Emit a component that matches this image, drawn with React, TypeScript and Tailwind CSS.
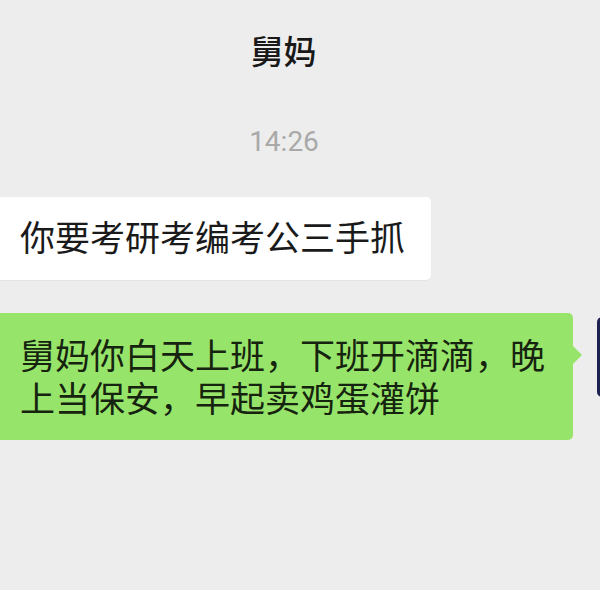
export default function App() {
    return (
        <div className="w-[600px] h-[590px] overflow-hidden bg-[#ededed] font-['Noto_Sans_CJK_SC','Noto_Sans',sans-serif]">
            {/* Header */}
            <div className="w-[567px] pt-[34px] text-center text-[33px] leading-[33px] font-medium text-[#191919]">
                舅妈
            </div>

            {/* Timestamp */}
            <div className="w-[568px] mt-[61px] text-center font-['Roboto',sans-serif] text-[28px] leading-[28px] text-[#a9a9a9]">
                14:26
            </div>

            {/* Incoming message */}
            <div className="mt-[41px] flex">
                <div className="bg-white rounded-r-[5px] pl-[20px] pr-[26px] pt-[17px] pb-[23px] text-[35px] leading-[43px] text-[#1a1a1a] shadow-[0_1px_1px_rgba(0,0,0,0.04)]">
                    你要考研考编考公三手抓
                </div>
            </div>

            {/* Outgoing message */}
            <div className="mt-[33px] flex items-start gap-[24px]">
                <div className="relative w-[573px] shrink-0 bg-[#97e46a] rounded-r-[5px] pl-[20px] pr-[26px] pt-[19px] pb-[22px] text-[35px] leading-[43px] text-[#16240f]">
                    舅妈你白天上班，下班开滴滴，晚上当保安，早起卖鸡蛋灌饼
                    <div className="absolute right-[-9px] top-[33px] w-0 h-0 border-y-[9px] border-y-transparent border-l-[9px] border-l-[#97e46a]" />
                </div>
                <div className="mt-[4px] w-[80px] h-[80px] shrink-0 rounded-[5px] bg-[#1d2150]" />
            </div>
        </div>
    );
}
